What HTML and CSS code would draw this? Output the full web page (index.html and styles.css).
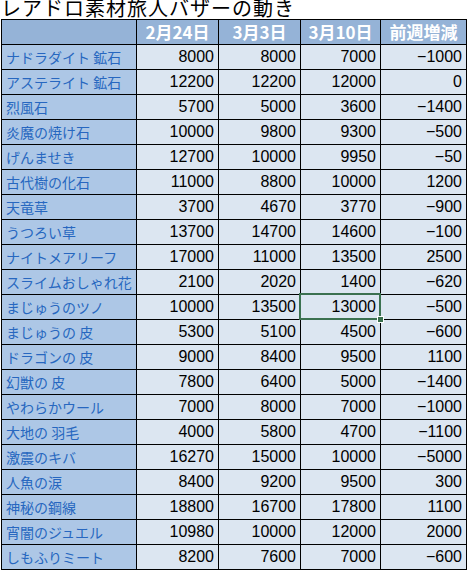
FILE: index.html
```html
<!DOCTYPE html>
<html lang="ja">
<head>
<meta charset="utf-8">
<title>レアドロ素材旅人バザーの動き</title>
<link rel="stylesheet" href="styles.css">
</head>
<body>
<h1 class="title">レアドロ素材旅人バザーの動き</h1>
<div class="sheet" role="table">
  <div class="row head" role="row">
    <div class="cell corner"></div>
    <div class="cell hd">2月24日</div>
    <div class="cell hd">3月3日</div>
    <div class="cell hd">3月10日</div>
    <div class="cell hd">前週増減</div>
  </div>
  <div class="row"><div class="cell label">ナドラダイト 鉱石</div><div class="cell num">8000</div><div class="cell num">8000</div><div class="cell num">7000</div><div class="cell num">−1000</div></div>
  <div class="row"><div class="cell label">アステライト 鉱石</div><div class="cell num">12200</div><div class="cell num">12200</div><div class="cell num">12000</div><div class="cell num">0</div></div>
  <div class="row"><div class="cell label">烈風石</div><div class="cell num">5700</div><div class="cell num">5000</div><div class="cell num">3600</div><div class="cell num">−1400</div></div>
  <div class="row"><div class="cell label">炎魔の焼け石</div><div class="cell num">10000</div><div class="cell num">9800</div><div class="cell num">9300</div><div class="cell num">−500</div></div>
  <div class="row"><div class="cell label">げんませき</div><div class="cell num">12700</div><div class="cell num">10000</div><div class="cell num">9950</div><div class="cell num">−50</div></div>
  <div class="row"><div class="cell label">古代樹の化石</div><div class="cell num">11000</div><div class="cell num">8800</div><div class="cell num">10000</div><div class="cell num">1200</div></div>
  <div class="row"><div class="cell label">天竜草</div><div class="cell num">3700</div><div class="cell num">4670</div><div class="cell num">3770</div><div class="cell num">−900</div></div>
  <div class="row"><div class="cell label">うつろい草</div><div class="cell num">13700</div><div class="cell num">14700</div><div class="cell num">14600</div><div class="cell num">−100</div></div>
  <div class="row"><div class="cell label">ナイトメアリーフ</div><div class="cell num">17000</div><div class="cell num">11000</div><div class="cell num">13500</div><div class="cell num">2500</div></div>
  <div class="row"><div class="cell label">スライムおしゃれ花</div><div class="cell num">2100</div><div class="cell num">2020</div><div class="cell num">1400</div><div class="cell num">−620</div></div>
  <div class="row"><div class="cell label">まじゅうのツノ</div><div class="cell num">10000</div><div class="cell num">13500</div><div class="cell num selected">13000<span class="sel-box"></span><span class="sel-handle"></span></div><div class="cell num">−500</div></div>
  <div class="row"><div class="cell label">まじゅうの 皮</div><div class="cell num">5300</div><div class="cell num">5100</div><div class="cell num">4500</div><div class="cell num">−600</div></div>
  <div class="row"><div class="cell label">ドラゴンの 皮</div><div class="cell num">9000</div><div class="cell num">8400</div><div class="cell num">9500</div><div class="cell num">1100</div></div>
  <div class="row"><div class="cell label">幻獣の 皮</div><div class="cell num">7800</div><div class="cell num">6400</div><div class="cell num">5000</div><div class="cell num">−1400</div></div>
  <div class="row"><div class="cell label">やわらかウール</div><div class="cell num">7000</div><div class="cell num">8000</div><div class="cell num">7000</div><div class="cell num">−1000</div></div>
  <div class="row"><div class="cell label">大地の 羽毛</div><div class="cell num">4000</div><div class="cell num">5800</div><div class="cell num">4700</div><div class="cell num">−1100</div></div>
  <div class="row"><div class="cell label">激震のキバ</div><div class="cell num">16270</div><div class="cell num">15000</div><div class="cell num">10000</div><div class="cell num">−5000</div></div>
  <div class="row"><div class="cell label">人魚の涙</div><div class="cell num">8400</div><div class="cell num">9200</div><div class="cell num">9500</div><div class="cell num">300</div></div>
  <div class="row"><div class="cell label">神秘の鋼線</div><div class="cell num">18800</div><div class="cell num">16700</div><div class="cell num">17800</div><div class="cell num">1100</div></div>
  <div class="row"><div class="cell label">宵闇のジュエル</div><div class="cell num">10980</div><div class="cell num">10000</div><div class="cell num">12000</div><div class="cell num">2000</div></div>
  <div class="row"><div class="cell label">しもふりミート</div><div class="cell num">8200</div><div class="cell num">7600</div><div class="cell num">7000</div><div class="cell num">−600</div></div>
</div>
</body>
</html>
```

FILE: styles.css
```css
html, body {
  margin: 0;
  padding: 0;
  background: #ffffff;
}
body {
  padding-left: 1px;
  font-family: "Noto Sans CJK JP", "Liberation Sans", sans-serif;
}
.title {
  margin: 0;
  height: 19px;
  font-size: 20px;
  line-height: 15px;
  font-weight: 400;
  color: #000000;
  letter-spacing: 1px;
  white-space: nowrap;
}
.sheet {
  display: grid;
  grid-template-columns: 135px 82px 82px 80px 86px;
  width: max-content;
  border-left: 1px solid #000;
  border-top: 1px solid #000;
}
.row {
  display: contents;
}
.cell {
  box-sizing: border-box;
  height: 25px;
  border-right: 1px solid #000;
  border-bottom: 1px solid #000;
  display: flex;
  align-items: center;
  white-space: nowrap;
}
.corner {
  background: #95b3d7;
}
.hd {
  background: #95b3d7;
  color: #ffffff;
  justify-content: center;
  font-family: "Noto Sans CJK JP", sans-serif;
  font-size: 17px;
  line-height: 20px;
  font-weight: 700;
}
.label {
  background: #adc7e6;
  color: #2767c0;
  padding-left: 4px;
  font-size: 14px;
  line-height: 18px;
  font-family: "Noto Sans CJK JP", sans-serif;
}
.num {
  background: #dce6f1;
  color: #000000;
  justify-content: flex-end;
  padding-right: 4px;
  font-family: "Liberation Sans", "DejaVu Sans", sans-serif;
  font-size: 16px;
  line-height: 18px;
}
.selected {
  position: relative;
}
.sel-box {
  position: absolute;
  left: -2px;
  top: -2px;
  right: -1px;
  bottom: -1px;
  border: 2px solid #3b7150;
  pointer-events: none;
}
.sel-handle {
  position: absolute;
  right: -4px;
  bottom: -4px;
  width: 5px;
  height: 5px;
  background: #3b7150;
  border: 1px solid #ffffff;
  box-sizing: content-box;
}
```
